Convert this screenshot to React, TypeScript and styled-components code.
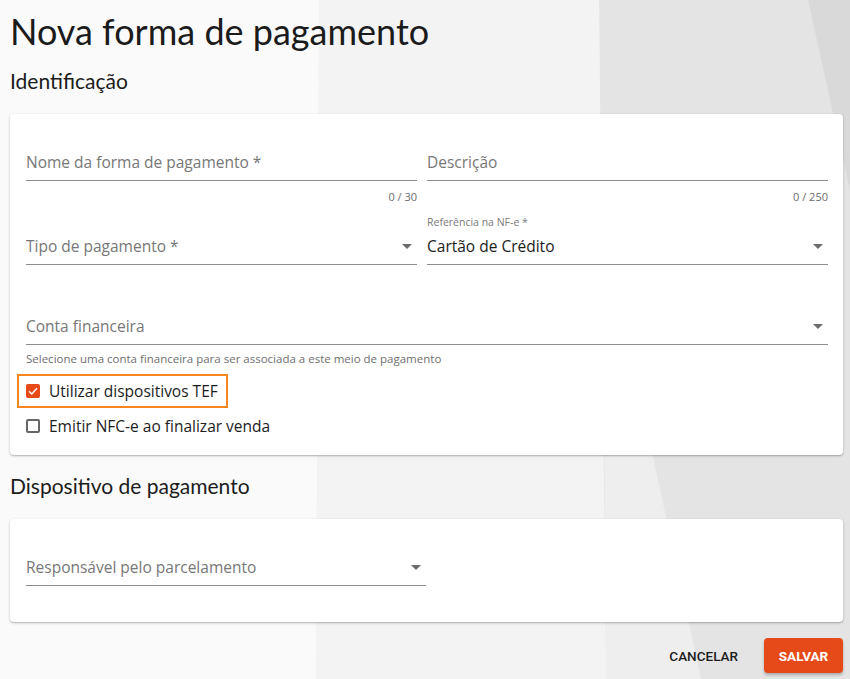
import styled, { createGlobalStyle } from "styled-components";

const bgSvg = `<svg xmlns='http://www.w3.org/2000/svg' width='850' height='679' viewBox='0 0 850 679'><rect width='850' height='679' fill='#fafafa'/><polygon points='319,0 599,0 606,679 316,679' fill='#f3f3f3'/><polygon points='599,0 850,0 850,679 606,679' fill='#e4e4e4'/><polygon points='603,225 701,679 606,679' fill='#eeeeee'/><polygon points='808,0 850,0 850,190' fill='#d9d9d9'/></svg>`;

const GlobalStyle = createGlobalStyle`
  * { box-sizing: border-box; }
  html, body {
    margin: 0;
    padding: 0;
  }
  body {
    font-family: "Open Sans", "Noto Sans", sans-serif;
    color: #1c1c1c;
    background: #fafafa url("data:image/svg+xml,${encodeURIComponent(bgSvg)}") no-repeat 0 0;
    min-height: 679px;
  }
`;

const Arrow = () => (
  <svg width="10" height="5" viewBox="0 0 10 5">
    <path d="M0 0 L10 0 L5 5 Z" fill="#6b6b6b" />
  </svg>
);

const Check = () => (
  <svg width="10" height="8" viewBox="0 0 10 8">
    <path d="M1 4.2 L3.8 7 L9 1.2" fill="none" stroke="#fff" strokeWidth="1.4" />
  </svg>
);

export default function App() {
  return (
    <>
      <GlobalStyle />
      <StPage>
        <StTitle>Nova forma de pagamento</StTitle>
        <StSectionTitle>Identificação</StSectionTitle>
        <StCard>
          <StGrid>
            <StFieldWrap>
              <StField>
                <StCaption />
                <StInputLine>
                  <StPlaceholder>Nome da forma de pagamento *</StPlaceholder>
                </StInputLine>
              </StField>
              <StCounter>0 / 30</StCounter>
            </StFieldWrap>
            <StFieldWrap>
              <StField>
                <StCaption />
                <StInputLine>
                  <StPlaceholder>Descrição</StPlaceholder>
                </StInputLine>
              </StField>
              <StCounter>0 / 250</StCounter>
            </StFieldWrap>
          </StGrid>

          <StGrid $top={12}>
            <StField>
              <StCaption />
              <StInputLine>
                <StPlaceholder>Tipo de pagamento *</StPlaceholder>
                <Arrow />
              </StInputLine>
            </StField>
            <StField>
              <StCaption>Referência na NF-e *</StCaption>
              <StInputLine>
                <StValue>Cartão de Crédito</StValue>
                <Arrow />
              </StInputLine>
            </StField>
          </StGrid>

          <StFieldWrap $top={30}>
            <StField>
              <StCaption />
              <StInputLine>
                <StPlaceholder>Conta financeira</StPlaceholder>
                <Arrow />
              </StInputLine>
            </StField>
            <StHelper>Selecione uma conta financeira para ser associada a este meio de pagamento</StHelper>
          </StFieldWrap>

          <StCheckRow $highlight>
            <StBox $checked>
              <Check />
            </StBox>
            <StCheckLabel>Utilizar dispositivos TEF</StCheckLabel>
          </StCheckRow>
          <StCheckRow>
            <StBox />
            <StCheckLabel>Emitir NFC-e ao finalizar venda</StCheckLabel>
          </StCheckRow>
        </StCard>

        <StSectionTitle $top={19} $bottom={21}>
          Dispositivo de pagamento
        </StSectionTitle>
        <StCard $bottom={36}>
          <StGrid $single>
            <StField>
              <StCaption />
              <StInputLine>
                <StPlaceholder>Responsável pelo parcelamento</StPlaceholder>
                <Arrow />
              </StInputLine>
            </StField>
          </StGrid>
        </StCard>

        <StActions>
          <StTextButton>CANCELAR</StTextButton>
          <StPrimaryButton>SALVAR</StPrimaryButton>
        </StActions>
      </StPage>
    </>
  );
}

const StPage = styled.div`
  width: 850px;
  padding: 0 7px 6px 10px;
  display: flex;
  flex-direction: column;
`;

const StTitle = styled.h1`
  margin: 10px 0 0 0;
  font-family: "Lato", "Open Sans", sans-serif;
  font-size: 36px;
  font-weight: 400;
  line-height: 42px;
  color: #1b1b1b;
`;

const StSectionTitle = styled.h2<{ $top?: number; $bottom?: number }>`
  margin: ${(p) => p.$top ?? 17}px 0 ${(p) => p.$bottom ?? 21}px 0;
  font-family: "Lato", "Open Sans", sans-serif;
  font-size: 21px;
  font-weight: 400;
  line-height: 24px;
  color: #1c1c1c;
`;

const StCard = styled.div<{ $bottom?: number }>`
  background: #ffffff;
  border-radius: 4px;
  box-shadow: 0 1px 3px rgba(0, 0, 0, 0.2), 0 1px 1px rgba(0, 0, 0, 0.12);
  padding: 17px 15px ${(p) => p.$bottom ?? 11}px 16px;
  display: flex;
  flex-direction: column;
`;

const StGrid = styled.div<{ $top?: number; $single?: boolean }>`
  display: grid;
  grid-template-columns: ${(p) => (p.$single ? "400px" : "391fr 401fr")};
  column-gap: 10px;
  margin-top: ${(p) => p.$top ?? 0}px;
`;

const StFieldWrap = styled.div<{ $top?: number }>`
  display: flex;
  flex-direction: column;
  margin-top: ${(p) => p.$top ?? 0}px;
`;

const StField = styled.div`
  display: flex;
  flex-direction: column;
  border-bottom: 1px solid #8d8d8d;
`;

const StCaption = styled.div`
  height: 20px;
  font-size: 10.5px;
  line-height: 14px;
  color: #7a7a7a;
`;

const StInputLine = styled.div`
  display: flex;
  align-items: center;
  justify-content: space-between;
  height: 22px;
  margin-bottom: 7px;
  padding-right: 5px;
`;

const StPlaceholder = styled.span`
  font-size: 15.5px;
  color: #777777;
`;

const StValue = styled.span`
  font-size: 15.5px;
  color: #1c1c1c;
`;

const StCounter = styled.div`
  margin-top: 9px;
  align-self: flex-end;
  font-size: 11px;
  line-height: 13px;
  color: #6b6b6b;
`;

const StHelper = styled.div`
  margin-top: 7px;
  font-size: 11.5px;
  line-height: 13px;
  color: #6f6f6f;
`;

const StCheckRow = styled.div<{ $highlight?: boolean }>`
  display: flex;
  align-items: center;
  gap: 9px;
  height: ${(p) => (p.$highlight ? 34 : 36)}px;
  ${(p) =>
    p.$highlight
      ? `
    align-self: flex-start;
    margin: 9px 0 0 -9px;
    padding: 0 8px 0 7px;
    border: 2px solid #f7861f;
  `
      : ""}
`;

const StBox = styled.span<{ $checked?: boolean }>`
  width: 14px;
  height: 14px;
  border-radius: 2px;
  display: flex;
  align-items: center;
  justify-content: center;
  background: ${(p) => (p.$checked ? "#e64a19" : "transparent")};
  border: ${(p) => (p.$checked ? "none" : "2px solid #666666")};
`;

const StCheckLabel = styled.span`
  font-size: 15.5px;
  color: #1c1c1c;
`;

const StActions = styled.div`
  display: flex;
  justify-content: flex-end;
  align-items: center;
  gap: 18px;
  margin-top: 16px;
`;

const StTextButton = styled.button`
  background: transparent;
  border: none;
  padding: 0 8px;
  height: 35px;
  font-family: "Roboto", sans-serif;
  font-size: 13.5px;
  font-weight: 500;
  color: #1c1c1c;
  cursor: pointer;
`;

const StPrimaryButton = styled.button`
  background: #e64a19;
  border: none;
  border-radius: 4px;
  width: 79px;
  height: 35px;
  font-family: "Roboto", sans-serif;
  font-size: 13.5px;
  font-weight: 700;
  color: #ffffff;
  box-shadow: 0 2px 3px rgba(0, 0, 0, 0.25);
  cursor: pointer;
`;
